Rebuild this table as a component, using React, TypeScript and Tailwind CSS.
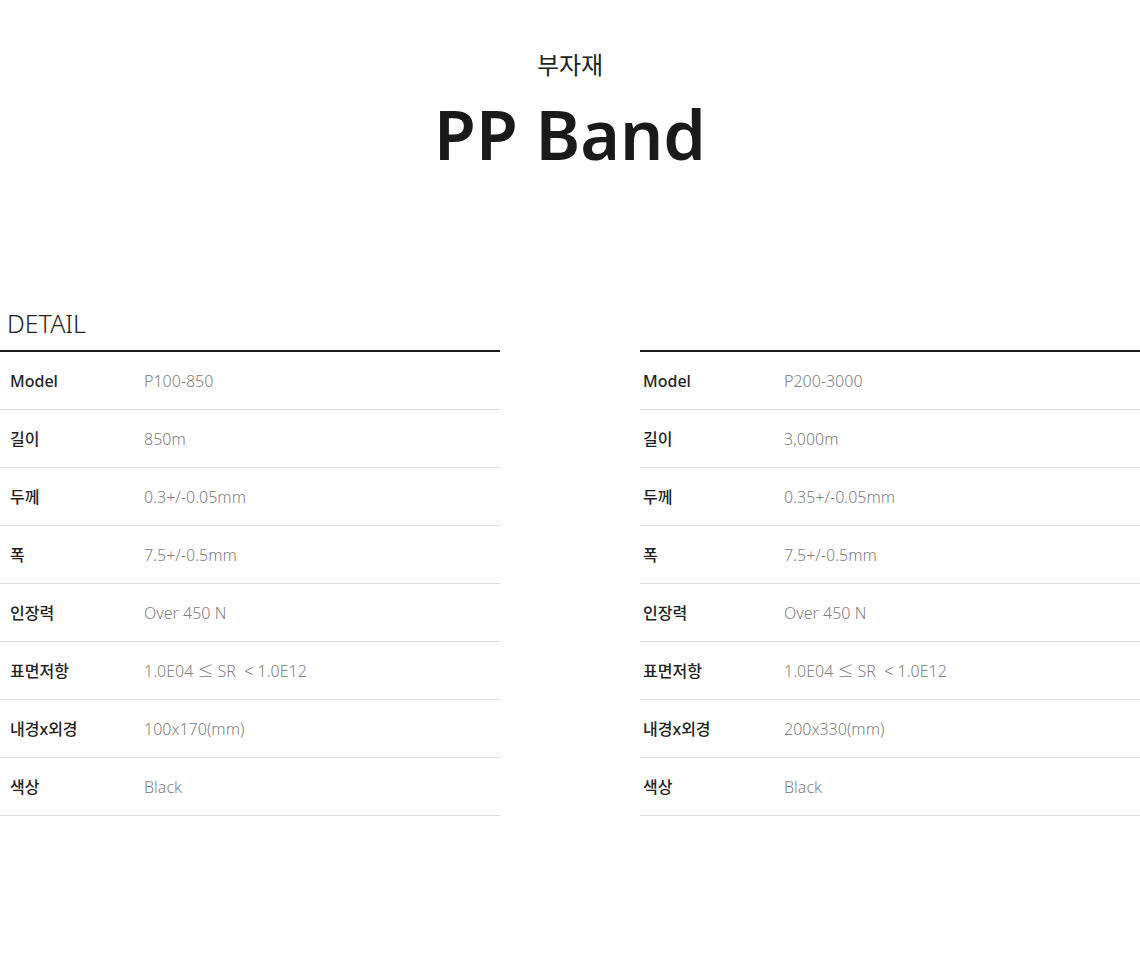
const left = [
  ['Model', 'P100-850'],
  ['길이', '850m'],
  ['두께', '0.3+/-0.05mm'],
  ['폭', '7.5+/-0.5mm'],
  ['인장력', 'Over 450 N'],
  ['표면저항', '1.0E04 ≤ SR  < 1.0E12'],
  ['내경x외경', '100x170(mm)'],
  ['색상', 'Black'],
];

const right = [
  ['Model', 'P200-3000'],
  ['길이', '3,000m'],
  ['두께', '0.35+/-0.05mm'],
  ['폭', '7.5+/-0.5mm'],
  ['인장력', 'Over 450 N'],
  ['표면저항', '1.0E04 ≤ SR  < 1.0E12'],
  ['내경x외경', '200x330(mm)'],
  ['색상', 'Black'],
];

function SpecTable({ rows, labelPad }: { rows: string[][]; labelPad: string }) {
  return (
    <div className="border-t-2 border-[#1a1a1a]">
      {rows.map(([label, value]) => (
        <div key={label} className="flex items-center h-[58px] border-b border-[#dddddd] text-[16px]">
          <div className={`w-[144px] ${labelPad} text-[#222] font-medium`}>{label}</div>
          <div className="text-[#808080] font-light whitespace-pre">{value}</div>
        </div>
      ))}
    </div>
  );
}

export default function App() {
  return (
    <div
      className="w-[1140px] h-[966px] bg-white"
      style={{ fontFamily: '"Noto Sans", "Noto Sans CJK KR", sans-serif' }}
    >
      {/* Header */}
      <div className="pt-[48px] flex flex-col items-center">
        <div className="text-[24px] leading-[34px] text-[#222]">부자재</div>
        <h1 className="mt-[12px] text-[68px] leading-[80px] font-semibold text-[#1a1a1a]">PP Band</h1>
      </div>

      {/* Detail */}
      <div className="mt-[133px] flex gap-[140px]">
        <div className="w-[500px]">
          <div className="pl-[7px] text-[25px] leading-[32px] font-light text-[#222] mb-[11px]">DETAIL</div>
          <SpecTable rows={left} labelPad="pl-[10px]" />
        </div>
        <div className="w-[500px] pt-[43px]">
          <SpecTable rows={right} labelPad="pl-[3px]" />
        </div>
      </div>
    </div>
  );
}
